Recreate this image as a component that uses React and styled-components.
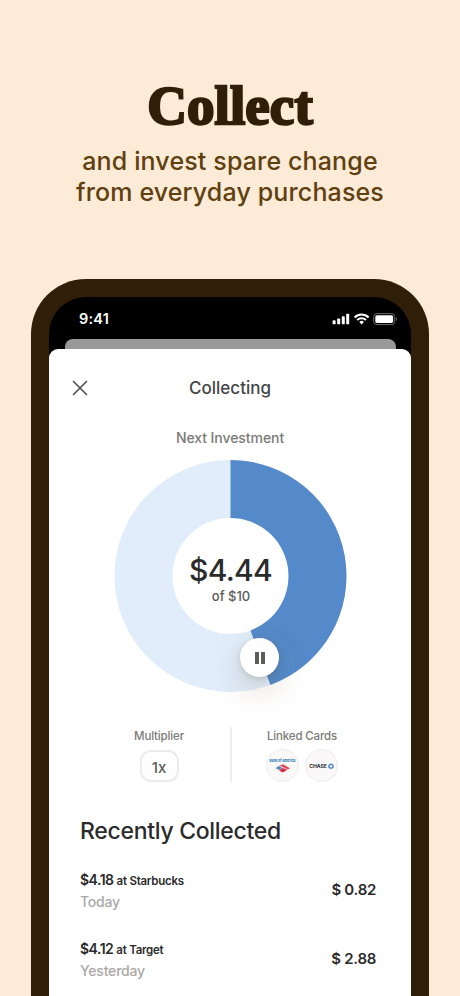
import styled, { createGlobalStyle } from 'styled-components';

const GlobalStyle = createGlobalStyle`
  * {
    box-sizing: border-box;
  }

  body {
    margin: 0;
    background: #fbebd7;
    font-family: Inter, 'Liberation Sans', sans-serif;
  }
`;

const Page = styled.main`
  display: flex;
  flex-direction: column;
  align-items: center;
  width: 460px;
  height: 996px;
  overflow: hidden;
  background: #fbebd7;
`;

const Hero = styled.header`
  height: 279px;
  flex: none;
  padding-top: 74px;
  text-align: center;
`;

const HeroTitle = styled.h1`
  margin: 0;
  color: #301f08;
  font-family: 'Liberation Serif', serif;
  font-size: 55px;
  font-weight: 700;
  line-height: 64px;
  letter-spacing: 0.1px;
  -webkit-text-stroke: 2.4px #301f08;
`;

const HeroText = styled.p`
  margin: 8px 0 0;
  color: #61400f;
  font-size: 25px;
  font-weight: 500;
  line-height: 31px;
  letter-spacing: 0.14px;
  white-space: nowrap;

  & + & {
    margin-top: 0;
  }
`;

const Phone = styled.div`
  flex: none;
  width: 398px;
  height: 760px;
  padding: 18px 18px 0;
  border-radius: 55px 55px 0 0;
  background: #301f08;
`;

const Screen = styled.div`
  display: flex;
  flex-direction: column;
  height: 100%;
  border-radius: 37px 37px 0 0;
  background: #000000;
  overflow: hidden;
`;

const StatusBar = styled.div`
  display: flex;
  flex: none;
  align-items: center;
  justify-content: space-between;
  height: 42px;
  padding: 1px 13px 0 30px;
`;

const Time = styled.span`
  color: #ffffff;
  font-size: 14.5px;
  font-weight: 600;
  letter-spacing: 0.2px;
`;

const BackSheet = styled.div`
  flex: none;
  height: 10px;
  margin: 0 15px 0 16px;
  border-radius: 8px 8px 0 0;
  background: #999999;
`;

const Sheet = styled.section`
  flex: 1;
  border-radius: 9px 9px 0 0;
  background: #ffffff;
`;

const SheetHeader = styled.div`
  display: grid;
  grid-template-columns: 60px 1fr 60px;
  align-items: center;
  height: 78px;

  svg {
    display: block;
    margin-left: 23px;
  }
`;

const SheetTitle = styled.h2`
  margin: 0;
  color: #454545;
  font-size: 17px;
  font-weight: 500;
  text-align: center;
`;

const Label = styled.div`
  color: #7b7a77;
  font-size: ${(props) => props.$size};
  font-weight: 500;
  line-height: 18px;
  letter-spacing: ${(props) => props.$spacing || 0};
  text-align: center;
`;

const NextInvestment = styled(Label)`
  padding-top: 2px;
`;

const Chart = styled.div`
  position: relative;
  width: 232px;
  height: 232px;
  margin: 13px auto 0;

  > svg {
    display: block;
  }
`;

const ChartCenter = styled.div`
  position: absolute;
  inset: 0;
  display: flex;
  flex-direction: column;
  align-items: center;
  justify-content: center;
  padding: 6px 0 0 1px;
`;

const Amount = styled.div`
  color: #2b2b2b;
  font-size: 30px;
  font-weight: 500;
  line-height: 34px;
  letter-spacing: -0.7px;
`;

const Goal = styled.div`
  padding-left: 1px;
  color: #5c5b59;
  font-size: 13px;
  font-weight: 500;
  line-height: 18px;
`;

const PauseButton = styled.button`
  position: absolute;
  left: 126px;
  top: 178px;
  display: flex;
  align-items: center;
  justify-content: center;
  gap: 2px;
  width: 39px;
  height: 39px;
  padding: 0;
  border: 0;
  border-radius: 50%;
  background: #ffffff;
  box-shadow: 0 12px 32px rgba(95, 60, 20, 0.2), 0 2px 6px rgba(60, 50, 40, 0.16);
`;

const PauseBar = styled.span`
  width: 4px;
  height: 12px;
  border-radius: 0.5px;
  background: #5c5b59;
`;

const Settings = styled.div`
  display: grid;
  grid-template-columns: 142px 142px;
  justify-content: center;
  height: 54px;
  margin-top: 35px;
`;

const Setting = styled.div`
  display: flex;
  flex-direction: column;
  align-items: center;
  gap: ${(props) => props.$gap};

  & + & {
    border-left: 2px solid #efeeed;
  }
`;

const MultiplierBox = styled.div`
  display: flex;
  align-items: center;
  justify-content: center;
  width: 39px;
  height: 32px;
  padding-top: 2px;
  border: 2px solid #ecebea;
  border-radius: 11px;
  color: #5c5b59;
  font-size: 15px;
  font-weight: 500;
`;

const Cards = styled.div`
  display: flex;
  gap: 6px;
`;

const CardBadge = styled.div`
  display: flex;
  flex-direction: column;
  align-items: center;
  justify-content: center;
  width: 33px;
  height: 33px;
  border: 1px solid #efebeb;
  border-radius: 50%;
  background: #faf8f9;

  svg {
    display: block;
    overflow: visible;
  }
`;

const List = styled.div`
  padding: 36px 35px 0 31px;
`;

const ListTitle = styled.h3`
  margin: 0 0 23.5px;
  color: #2b2b2b;
  font-size: 23px;
  font-weight: 500;
  line-height: 28px;
  letter-spacing: -0.3px;
`;

const Row = styled.div`
  display: flex;
  align-items: center;
  justify-content: space-between;
  height: 44px;
  margin-bottom: 25.5px;
  color: #2b2b2b;
`;

const Purchase = styled.div`
  font-size: 14px;
  font-weight: 600;
  line-height: 22px;
  letter-spacing: -0.5px;
`;

const Merchant = styled.span`
  font-size: 11.5px;
  letter-spacing: -0.25px;
`;

const Day = styled.div`
  margin-top: -1px;
  color: #aaa9a6;
  font-size: 14px;
  font-weight: 500;
  line-height: 22px;
  letter-spacing: -0.2px;
`;

const Collected = styled.div`
  padding-bottom: 3px;
  font-size: 15px;
  font-weight: 600;
  letter-spacing: -0.3px;
`;

const purchases = [
  { price: '$4.18', merchant: 'Starbucks', day: 'Today', collected: '$ 0.82' },
  { price: '$4.12', merchant: 'Target', day: 'Yesterday', collected: '$ 2.88' },
];

function StatusIcons() {
  return (
    <svg width="66" height="14" viewBox="0 0 66 14" fill="none">
      <g fill="#fff">
        <rect x="0.6" y="8.3" width="3" height="4" rx="0.9" />
        <rect x="5.2" y="6.4" width="3" height="5.9" rx="0.9" />
        <rect x="9.8" y="4.2" width="3" height="8.1" rx="0.9" />
        <rect x="14.2" y="1.7" width="3" height="10.6" rx="0.9" />
      </g>
      <g stroke="#fff" strokeWidth="2.1">
        <path d="M22.6 5.4a10 10 0 0 1 14 0" />
        <path d="M25.2 8.1a6.3 6.3 0 0 1 8.8 0" />
      </g>
      <path d="M27.3 9.9a3.4 3.4 0 0 1 4.6 0l-2.3 2.5z" fill="#fff" />
      <rect x="41.7" y="1.6" width="21" height="11" rx="3.2" stroke="#6e6e6e" />
      <rect x="43.3" y="3.2" width="17.8" height="7.8" rx="1.7" fill="#fff" />
      <path d="M64 5.2a2.3 2.3 0 0 1 0 3.8z" fill="#6e6e6e" />
    </svg>
  );
}

function Donut({ value, total }) {
  const angle = (value / total) * 2 * Math.PI;
  const x = Math.sin(angle);
  const y = -Math.cos(angle);
  const c = 116;

  return (
    <svg width="233" height="232" viewBox="-0.5 0 233 232">
      <circle cx={c} cy={c} r="87" fill="none" stroke="#e1edfb" strokeWidth="58" />
      <path
        d={`M${c} 0A116 116 0 0 1 ${c + 116 * x} ${c + 116 * y}L${c + 58 * x} ${c + 58 * y}A58 58 0 0 0 ${c} 58z`}
        fill="#548aca"
      />
    </svg>
  );
}

function BankOfAmericaLogo() {
  return (
    <svg width="29" height="14" viewBox="0 0 29 14">
      <text
        x="1.5"
        y="3.2"
        textLength="26"
        lengthAdjust="spacingAndGlyphs"
        fontFamily="Inter, sans-serif"
        fontSize="3.8"
        fontWeight="700"
        fill="#1670b4"
      >
        Bank of America
      </text>
      <path d="M7.6 9l3.4-2 3.500 2-3.600 2z" fill="#4f86c0" />
      <path d="M11.4 6.700l3.400-1.400 7.300 3.900-2.300 1.400z" fill="#e34654" />
      <path d="M14.600 9l4.900 1.800-4.900 2.700-3.500-2.100z" fill="#dc2944" />
      <path d="M13 7.700l6.600 2.900" stroke="#f8e4e8" strokeWidth="0.4" />
    </svg>
  );
}

function ChaseLogo() {
  return (
    <svg width="25" height="8" viewBox="0 0 25 8">
      <text
        x="0.3"
        y="5.9"
        textLength="17.6"
        lengthAdjust="spacingAndGlyphs"
        fontFamily="Inter, sans-serif"
        fontSize="4.8"
        fontWeight="700"
        fill="#222326"
      >
        CHASE
      </text>
      <path
        d="M21 2.500h2l1 1v1.600l-1 1h-2l-1-1V3.500z"
        fill="none"
        stroke="#4a86cb"
        strokeWidth="1.4"
      />
    </svg>
  );
}

export default function App() {
  return (
    <>
      <GlobalStyle />
      <Page>
        <Hero>
          <HeroTitle>Collect</HeroTitle>
          <HeroText>and invest spare change</HeroText>
          <HeroText>from everyday purchases</HeroText>
        </Hero>
        <Phone>
          <Screen>
            <StatusBar>
              <Time>9:41</Time>
              <StatusIcons />
            </StatusBar>
            <BackSheet />
            <Sheet>
              <SheetHeader>
                <svg width="16" height="16" viewBox="0 0 16 16">
                  <path
                    d="M1.500 1.500l13 13m0-13l-13 13"
                    stroke="#555452"
                    strokeWidth="1.7"
                    strokeLinecap="round"
                  />
                </svg>
                <SheetTitle>Collecting</SheetTitle>
              </SheetHeader>
              <NextInvestment $size="14px" $spacing="-0.07px">
                Next Investment
              </NextInvestment>
              <Chart>
                <Donut value={4.44} total={10} />
                <ChartCenter>
                  <Amount>$4.44</Amount>
                  <Goal>of $10</Goal>
                </ChartCenter>
                <PauseButton aria-label="Pause">
                  <PauseBar />
                  <PauseBar />
                </PauseButton>
              </Chart>
              <Settings>
                <Setting $gap="5px">
                  <Label $size="11.5px" $spacing="-0.15px">
                    Multiplier
                  </Label>
                  <MultiplierBox>1x</MultiplierBox>
                </Setting>
                <Setting $gap="4px">
                  <Label $size="11.5px" $spacing="-0.15px">
                    Linked Cards
                  </Label>
                  <Cards>
                    <CardBadge>
                      <BankOfAmericaLogo />
                    </CardBadge>
                    <CardBadge>
                      <ChaseLogo />
                    </CardBadge>
                  </Cards>
                </Setting>
              </Settings>
              <List>
                <ListTitle>Recently Collected</ListTitle>
                {purchases.map((item) => (
                  <Row key={item.merchant}>
                    <div>
                      <Purchase>
                        {item.price} <Merchant>at {item.merchant}</Merchant>
                      </Purchase>
                      <Day>{item.day}</Day>
                    </div>
                    <Collected>{item.collected}</Collected>
                  </Row>
                ))}
              </List>
            </Sheet>
          </Screen>
        </Phone>
      </Page>
    </>
  );
}
